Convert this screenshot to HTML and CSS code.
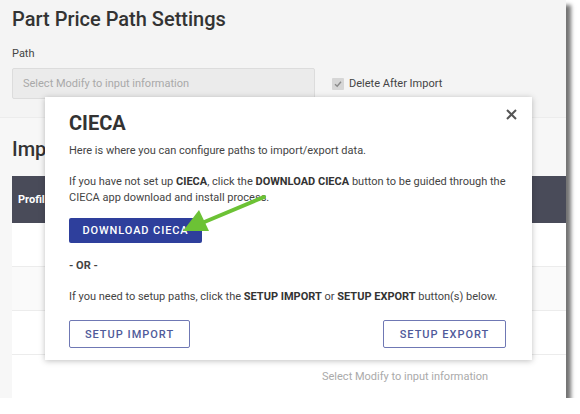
FILE: index.html
```html
<!DOCTYPE html>
<html>
<head>
<meta charset="utf-8">
<link rel="stylesheet" href="styles.css">
</head>
<body>
<div class="frame">
  <div class="page">
    <section class="settings">
      <h1 class="title">Part Price Path Settings</h1>
      <div class="label">Path</div>
      <div class="row">
        <div class="input">Select Modify to input information</div>
        <label class="check"><span class="box"><svg width="10" height="10" viewBox="0 0 10 10"><path d="M2 5.2 L4.2 7.2 L8 2.8" fill="none" stroke="#8a8a8a" stroke-width="1.4"/></svg></span>Delete After Import</label>
      </div>
    </section>
    <section class="imports">
      <h2 class="title2">Imp</h2>
      <div class="thead"><span>Profil</span></div>
      <div class="trow"></div>
      <div class="trow"></div>
      <div class="trow"></div>
      <div class="trow last"><span class="muted">Select Modify to input information</span></div>
    </section>
  </div>

  <div class="dialog">
    <button class="close" aria-label="close"><svg width="11" height="11" viewBox="0 0 11 11"><path d="M1 1 L10 10 M10 1 L1 10" stroke="#555" stroke-width="2"/></svg></button>
    <h3 class="dtitle">CIECA</h3>
    <p class="p1">Here is where you can configure paths to import/export data.</p>
    <p class="p2">If you have not set up <b>CIECA</b>, click the <b>DOWNLOAD CIECA</b> button to be guided through the CIECA app download and install process.</p>
    <button class="primary">DOWNLOAD CIECA</button>
    <p class="or">- OR -</p>
    <p class="p3">If you need to setup paths, click the <b>SETUP IMPORT</b> or <b>SETUP EXPORT</b> button(s) below.</p>
    <div class="actions">
      <button class="outline">SETUP IMPORT</button>
      <button class="outline">SETUP EXPORT</button>
    </div>
  </div>

  <svg class="arrow" width="90" height="45" viewBox="0 0 90 45">
    <path d="M84 3 L22 29" stroke="#6cc235" stroke-width="4" stroke-linecap="round"/>
    <path d="M3 37 L19 16 L29 37 Z" fill="#6cc235"/>
  </svg>
</div>
</body>
</html>
```

FILE: styles.css
```css
* { box-sizing: border-box; }
html, body { margin: 0; padding: 0; background: #fff; }
body { font-family: Roboto, "Liberation Sans", sans-serif; color: #333; }

.frame {
  position: relative;
  width: 566px;
  height: 398px;
  background: #f4f4f4;
  box-shadow: 5px 5px 4px rgba(0,0,0,0.55);
  overflow: hidden;
}

.page { display: flex; flex-direction: column; }

.settings { padding: 6px 12px 0 12px; height: 118px; border-bottom: 1px solid #ececec; }
.title { margin: 0; font-size: 20px; font-weight: 500; color: #333; line-height: 26px; }
.label { margin-top: 15px; font-size: 11px; color: #444; line-height: 14px; }
.row { display: flex; align-items: center; margin-top: 7px; gap: 17px; }
.input {
  width: 303px; height: 31px;
  background: #ebebeb; border: 1px solid #dcdcdc; border-radius: 2px;
  font-size: 11px; color: #a9a9a9; line-height: 29px; padding-left: 10px;
}
.check { display: flex; align-items: center; gap: 5px; font-size: 11px; color: #444; }
.box { width: 12px; height: 12px; background: #d6d6d6; display: flex; align-items: center; justify-content: center; border-radius: 1px; }

.imports { background: #f7f7f7; padding: 0 0 0 12px; flex: 1; }
.title2 { margin: 0; padding-top: 18px; font-size: 20px; font-weight: 500; line-height: 26px; color: #333; height: 58px; }
.thead { height: 47px; background: #494b59; color: #fff; font-size: 11px; font-weight: 700; display: flex; align-items: center; padding-left: 6px; }
.trow { height: 44px; background: #fff; border-bottom: 1px solid #ececec; }
.trow:nth-child(4) { background: #fafafa; }
.trow.last { display: flex; align-items: center; padding-left: 310px; height: 44px; }
.muted { font-size: 11px; color: #aaa; }

.dialog {
  position: absolute;
  left: 45px; top: 97px;
  width: 487px; height: 263px;
  background: #fff;
  box-shadow: 0 1px 6px rgba(0,0,0,0.25);
  padding: 14px 24px 0 24px;
}
.close { position: absolute; right: 15px; top: 11px; border: 0; background: none; padding: 0; width: 12px; height: 12px; }
.dtitle { margin: 0; font-size: 20px; font-weight: 700; color: #333; line-height: 24px; }
.dialog p { margin: 0; font-size: 11px; line-height: 16px; color: #444; }
.dialog b { color: #333; }
.p1 { margin-top: 8px !important; }
.p2 { margin-top: 15px !important; width: 440px; }
.primary {
  margin-top: 12px; display: block;
  width: 133px; height: 25px;
  background: #2e3f9c; color: #fff; border: 0; border-radius: 2px;
  font-family: inherit; font-size: 11px; font-weight: 500; letter-spacing: 0.9px;
  white-space: nowrap; padding: 0;
}
.or { margin-top: 15px !important; font-weight: 700; }
.p3 { margin-top: 15px !important; }
.actions { display: flex; justify-content: space-between; margin-top: 15px; padding-right: 2px; }
.outline {
  height: 28px; background: #fff; border: 1px solid #6f78b4; border-radius: 2px;
  color: #4f5a9a; font-family: inherit; font-size: 11px; font-weight: 500; letter-spacing: 1px;
  padding: 0; white-space: nowrap;
}
.outline:first-child { width: 121px; }
.outline:last-child { width: 123px; }

.arrow { position: absolute; left: 180px; top: 194px; }
```
